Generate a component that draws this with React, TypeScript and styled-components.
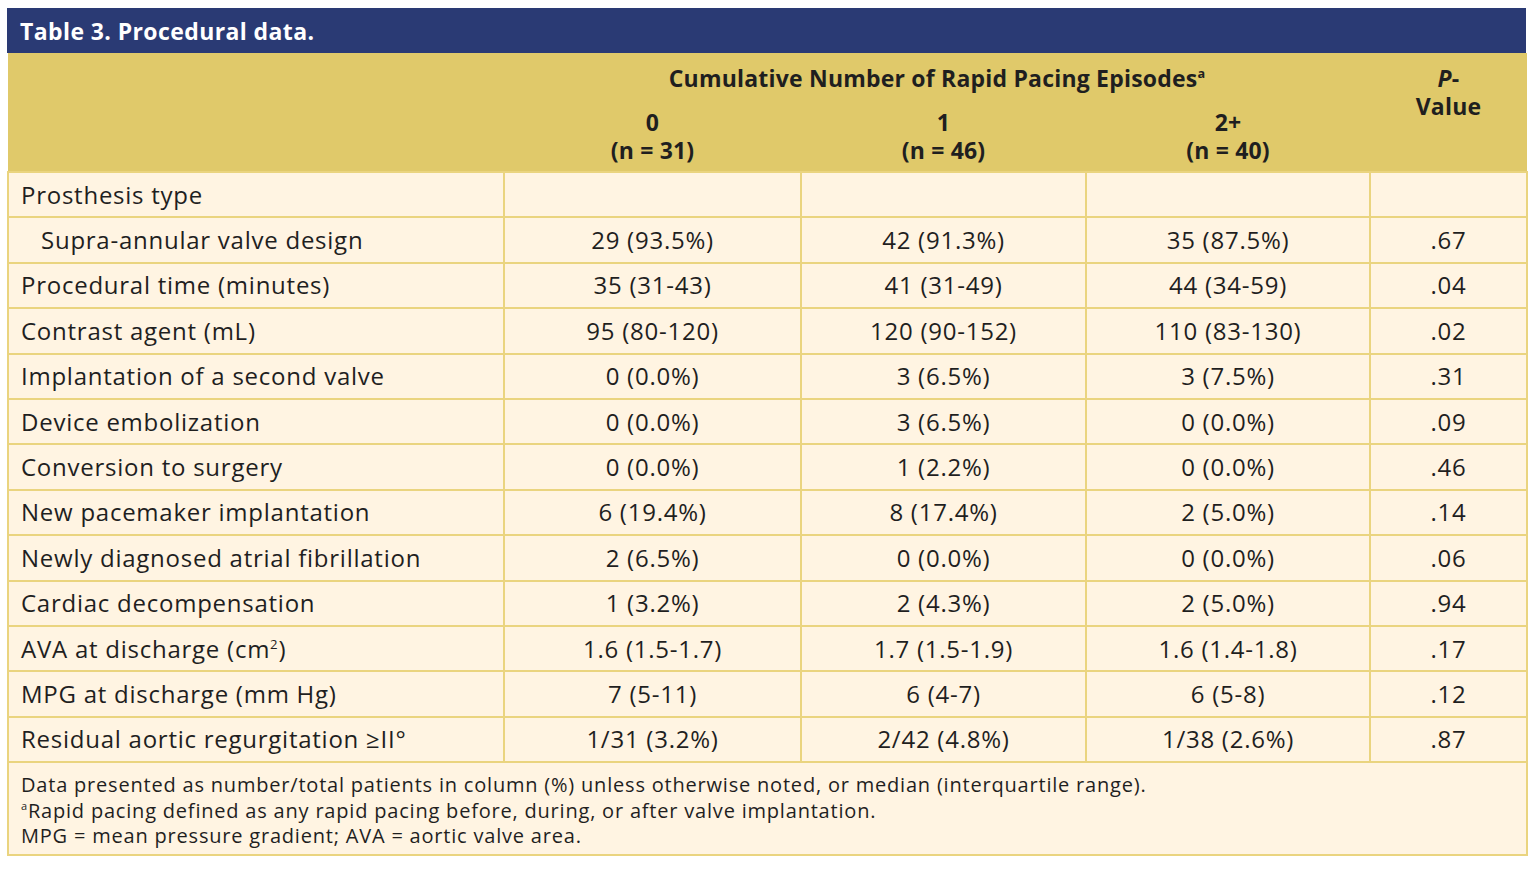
import React from "react";
import styled, { createGlobalStyle } from "styled-components";

const GlobalStyle = createGlobalStyle`
  html, body { margin: 0; padding: 0; background: #ffffff; }
  body { font-family: "Open Sans", "Noto Sans", "Liberation Sans", sans-serif; color: #1f1f1f; }
`;

const Page = styled.div`
  padding: 8px 0 0 7px;
`;

const Frame = styled.div`
  width: 1519px;
  display: flex;
  flex-direction: column;
`;

const TitleBar = styled.div`
  background: #2a3a74;
  color: #ffffff;
  font-weight: 700;
  font-size: 23px;
  letter-spacing: 0.4px;
  height: 45px;
  display: flex;
  align-items: center;
  padding-left: 13px;
  box-sizing: border-box;
`;

const Table = styled.table`
  width: 1519px;
  border-collapse: collapse;
  table-layout: fixed;
  font-size: 24px;
  letter-spacing: 0.75px;
`;

const HeadRow = styled.tr`
  background: #e0c96a;
`;

const HeadCell = styled.th<{ $pt?: number; $pb?: number }>`
  font-weight: 700;
  font-size: 23px;
  text-align: center;
  vertical-align: top;
  line-height: 28px;
  letter-spacing: 0.2px;
  padding: ${(p) => p.$pt ?? 0}px 4px ${(p) => p.$pb ?? 0}px;
  border: none;
  color: #1f1f1f;
`;

const Row = styled.tr`
  background: #fff4e2;
`;

const Cell = styled.td<{ $indent?: boolean; $left?: boolean }>`
  height: 45.4px;
  box-sizing: border-box;
  border: 2px solid #ead47f;
  padding: 0 ${(p) => (p.$left ? "8px" : "4px")} 0 ${(p) => (p.$left ? (p.$indent ? "32px" : "12px") : "4px")};
  text-align: ${(p) => (p.$left ? "left" : "center")};
  vertical-align: middle;
  line-height: 28px;
  white-space: nowrap;
`;

const FootCell = styled.td`
  background: #fff4e2;
  border: 2px solid #ead47f;
  padding: 9px 12px 5px;
  font-size: 20px;
  letter-spacing: 0.8px;
  line-height: 25.5px;
`;

const Sup = styled.sup`
  font-size: 0.55em;
  vertical-align: 0.7em;
  line-height: 0;
`;

const Ital = styled.i`
  font-style: italic;
`;

type RowData = { label: React.ReactNode; indent?: boolean; v: [string, string, string, string] };

const rows: RowData[] = [
  { label: "Prosthesis type", v: ["", "", "", ""] },
  { label: "Supra-annular valve design", indent: true, v: ["29 (93.5%)", "42 (91.3%)", "35 (87.5%)", ".67"] },
  { label: "Procedural time (minutes)", v: ["35 (31-43)", "41 (31-49)", "44 (34-59)", ".04"] },
  { label: "Contrast agent (mL)", v: ["95 (80-120)", "120 (90-152)", "110 (83-130)", ".02"] },
  { label: "Implantation of a second valve", v: ["0 (0.0%)", "3 (6.5%)", "3 (7.5%)", ".31"] },
  { label: "Device embolization", v: ["0 (0.0%)", "3 (6.5%)", "0 (0.0%)", ".09"] },
  { label: "Conversion to surgery", v: ["0 (0.0%)", "1 (2.2%)", "0 (0.0%)", ".46"] },
  { label: "New pacemaker implantation", v: ["6 (19.4%)", "8 (17.4%)", "2 (5.0%)", ".14"] },
  { label: "Newly diagnosed atrial fibrillation", v: ["2 (6.5%)", "0 (0.0%)", "0 (0.0%)", ".06"] },
  { label: "Cardiac decompensation", v: ["1 (3.2%)", "2 (4.3%)", "2 (5.0%)", ".94"] },
  { label: <>AVA at discharge (cm<Sup>2</Sup>)</>, v: ["1.6 (1.5-1.7)", "1.7 (1.5-1.9)", "1.6 (1.4-1.8)", ".17"] },
  { label: "MPG at discharge (mm Hg)", v: ["7 (5-11)", "6 (4-7)", "6 (5-8)", ".12"] },
  { label: "Residual aortic regurgitation ≥II°", v: ["1/31 (3.2%)", "2/42 (4.8%)", "1/38 (2.6%)", ".87"] },
];

export default function App() {
  return (
    <Page>
      <GlobalStyle />
      <Frame>
        <TitleBar>Table 3. Procedural data.</TitleBar>
        <Table>
          <colgroup>
            <col style={{ width: 496 }} />
            <col style={{ width: 297 }} />
            <col style={{ width: 285 }} />
            <col style={{ width: 284 }} />
            <col style={{ width: 157 }} />
          </colgroup>
          <thead>
            <HeadRow>
              <HeadCell rowSpan={2} />
              <HeadCell colSpan={3} $pt={11} $pb={16}>
                Cumulative Number of Rapid Pacing Episodes<Sup>a</Sup>
              </HeadCell>
              <HeadCell rowSpan={2} $pt={11}>
                <Ital>P</Ital>-<br />Value
              </HeadCell>
            </HeadRow>
            <HeadRow>
              <HeadCell $pb={7}>0<br />(n = 31)</HeadCell>
              <HeadCell $pb={7}>1<br />(n = 46)</HeadCell>
              <HeadCell $pb={7}>2+<br />(n = 40)</HeadCell>
            </HeadRow>
          </thead>
          <tbody>
            {rows.map((r, i) => (
              <Row key={i}>
                <Cell $left $indent={r.indent}>{r.label}</Cell>
                {r.v.map((x, j) => (
                  <Cell key={j}>{x}</Cell>
                ))}
              </Row>
            ))}
            <tr>
              <FootCell colSpan={5}>
                Data presented as number/total patients in column (%) unless otherwise noted, or median (interquartile range).
                <br />
                <Sup>a</Sup>Rapid pacing defined as any rapid pacing before, during, or after valve implantation.
                <br />
                MPG = mean pressure gradient; AVA = aortic valve area.
              </FootCell>
            </tr>
          </tbody>
        </Table>
      </Frame>
    </Page>
  );
}
